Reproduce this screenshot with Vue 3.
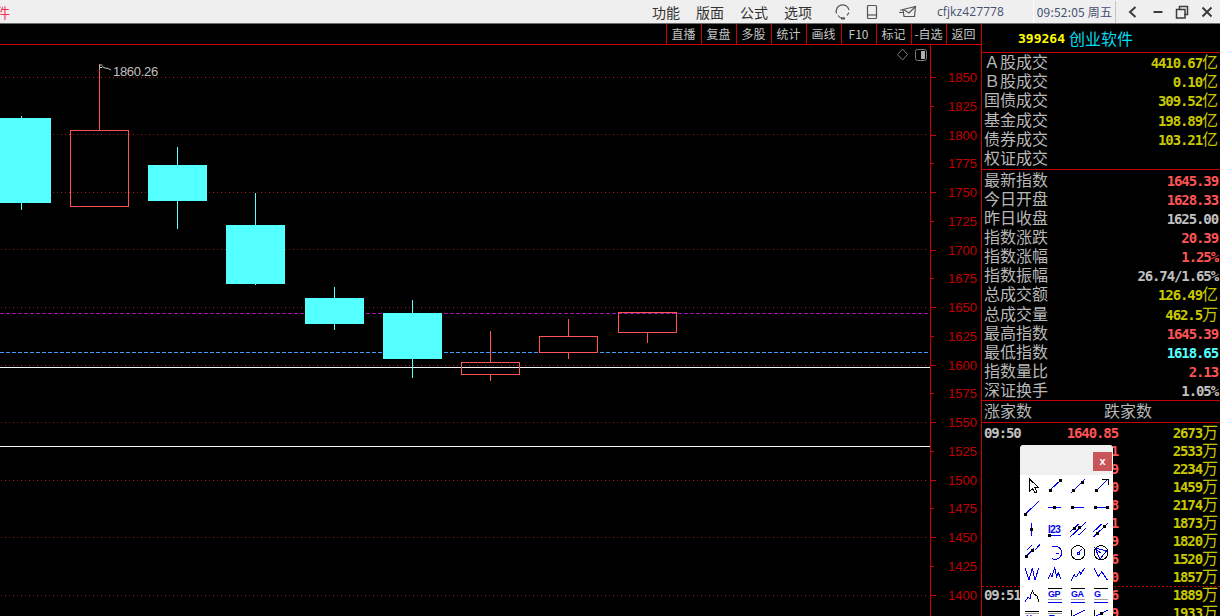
<template>
  <div class="screen">
    <header class="titlebar">
      <span class="app-name">件</span>
      <nav class="menu">
        <span v-for="m in menus" :key="m">{{ m }}</span>
      </nav>
      <div class="tray">
        <svg class="tray-icon" width="20" height="20" viewBox="0 0 20 20">
          <path d="M3.5 11.5A6.5 6.5 0 1 1 16 8" />
          <path d="M5 13.5a6.5 6.5 0 0 0 7 2.5" />
          <path d="M16 10.5l-2 3" />
          <path d="M8 16.5h4" class="thick" />
        </svg>
        <svg class="tray-icon phone" width="12" height="16" viewBox="0 0 12 16">
          <rect x="1.5" y="1.5" width="9" height="13" rx="1" />
          <path d="M1.5 11h9" />
        </svg>
        <svg class="tray-icon mail" width="18" height="14" viewBox="0 0 18 14">
          <path d="M4 4.5L16.5 1.5 15.5 11.5H5z" />
          <path d="M4.5 4.5L10 8l6.5-6.5" />
          <path d="M1 5h3M0 7.5h4" />
        </svg>
        <span class="user">cfjkz427778</span>
      </div>
      <div class="clock">09:52:05 周五</div>
      <div class="win-ctrl">
        <button class="win-btn">
          <svg width="14" height="14" viewBox="0 0 14 14"><path d="M9.5 2L4 7l5.500 5" /></svg>
        </button>
        <button class="win-btn">
          <svg width="14" height="14" viewBox="0 0 14 14"><path d="M2.500 7h9" /></svg>
        </button>
        <button class="win-btn">
          <svg width="14" height="14" viewBox="0 0 14 14">
            <path class="thin" d="M1.500 4.500h8.500v8.500h-8.500z" />
            <path class="thin" d="M4.500 4.500v-3h8v8h-3" />
          </svg>
        </button>
        <button class="win-btn">
          <svg width="14" height="14" viewBox="0 0 14 14"><path d="M2.500 2.500l9 9M11.500 2.500l-9 9" /></svg>
        </button>
      </div>
    </header>

    <main class="body">
      <section class="chart">
        <div class="chart-tools">
          <span v-for="t in chartTools" :key="t" class="chart-tool">{{ t }}</span>
        </div>
        <svg class="plot" width="981" height="571" viewBox="0 45 981 571">
          <line v-for="y in gridYs" :key="y" class="grid" x1="1" x2="926" :y1="y + 0.5" :y2="y + 0.5" />
          <line class="level white" x1="0" x2="930" y1="367.500" y2="367.500" />
          <line class="level white" x1="0" x2="930" y1="446.500" y2="446.500" />
          <line class="level purple" x1="0" x2="930" y1="313.500" y2="313.500" />
          <line class="level blue" x1="0" x2="930" y1="352.500" y2="352.500" />

          <g v-for="c in candles" :key="c.x" :class="c.up ? 'up' : 'down'">
            <line class="wick" :x1="c.x + 29.500" :x2="c.x + 29.500" :y1="c.high" :y2="c.top" />
            <line class="wick" :x1="c.x + 29.500" :x2="c.x + 29.500" :y1="c.bottom" :y2="c.low" />
            <rect
              class="body-box"
              :x="c.x + (c.up ? 0.500 : 0)"
              :y="c.top + (c.up ? 0.500 : 0)"
              :width="c.up ? 58 : 59"
              :height="c.bottom - c.top - (c.up ? 1 : 0)"
            />
          </g>

          <path class="peak" d="M99.500 69v-4h3M100 67.500h2M102 66.500l3 1.500 3 .5 3 1.500" />
          <text class="peak-text" x="113" y="76">1860.26</text>

          <path class="mark" d="M902.500 49l5 5.500-5 5.500-5-5.500z" />
          <rect class="mark" x="915.500" y="49.500" width="11" height="11" rx="2" />
          <rect class="mark-fill" x="921" y="51" width="4" height="8" />

          <line class="axis" x1="930.500" x2="930.500" y1="45" y2="616" />
          <g v-for="(t, i) in axisTicks" :key="t.label">
            <line class="axis" x1="930" :x2="i % 2 === 0 ? 936 : 934" :y1="t.y + 0.500" :y2="t.y + 0.500" />
            <text class="axis-label" x="948" :y="t.y + 5">{{ t.label }}</text>
          </g>
        </svg>
      </section>

      <aside class="side">
        <div class="quote-title">
          <span class="code">399264</span>
          <span class="name">创业软件</span>
        </div>

        <div class="stats first">
          <div v-for="r in volumeRows" :key="r.label" class="stat">
            <span class="label">{{ r.label }}</span>
            <span class="value yellow">
              <span class="num">{{ r.value }}</span><span class="unit">{{ r.unit }}</span>
            </span>
          </div>
        </div>

        <div class="stats second">
          <div v-for="r in indexRows" :key="r.label" class="stat">
            <span class="label">{{ r.label }}</span>
            <span class="value" :class="r.color">
              <span class="num">{{ r.value }}</span><span v-if="r.unit" class="unit">{{ r.unit }}</span>
            </span>
          </div>
        </div>

        <div class="breadth">
          <span>涨家数</span>
          <span>跌家数</span>
        </div>

        <div class="ticks">
          <div v-for="(t, i) in ticks" :key="i" class="tick" :class="{ 'new-min': t.time === '09:51' }">
            <span class="num gray">{{ t.time }}</span>
            <span class="num red price">{{ t.price }}</span>
            <span class="value yellow">
              <span class="num">{{ t.vol }}</span><span class="unit">万</span>
            </span>
          </div>
        </div>

        <div class="palette">
          <div class="palette-head">
            <button class="palette-close">x</button>
          </div>
          <div class="palette-grid">
            <svg v-for="(ic, i) in drawTools" :key="i" width="23" height="22" viewBox="0 0 23 22">
              <path v-if="ic.gray" class="t-gray" :d="ic.gray" />
              <path v-if="ic.blue" class="t-blue" :d="ic.blue" />
              <path v-if="ic.black" class="t-black" :d="ic.black" />
              <text v-if="ic.text" class="t-text" :x="ic.tx || 5" :y="ic.ty || 12" :font-size="ic.ts || 9">{{ ic.text }}</text>
              <rect v-for="(d, j) in ic.dots || []" :key="j" class="t-dot" :x="d[0] - 1.500" :y="d[1] - 1.500" width="3" height="3" />
            </svg>
          </div>
        </div>
      </aside>
    </main>
  </div>
</template>

<script setup>
const menus = ['功能', '版面', '公式', '选项']
const chartTools = ['直播', '复盘', '多股', '统计', '画线', 'F10', '标记', '-自选', '返回']

const gridYs = [77, 134, 192, 249, 307, 365, 422, 480, 537, 595]

const axisTicks = []
for (let i = 0; i < 19; i++) {
  axisTicks.push({ label: String(1850 - i * 25), y: Math.round(77 + i * 28.75) })
}

const candles = [
  { x: -8, up: false, high: 116, top: 118, bottom: 203, low: 210 },
  { x: 70, up: true, high: 64, top: 130, bottom: 207, low: 207 },
  { x: 148, up: false, high: 147, top: 165, bottom: 201, low: 229 },
  { x: 226, up: false, high: 193, top: 225, bottom: 284, low: 285 },
  { x: 305, up: false, high: 287, top: 298, bottom: 324, low: 330 },
  { x: 383, up: false, high: 300, top: 313, bottom: 359, low: 378 },
  { x: 461, up: true, high: 331, top: 362, bottom: 375, low: 381 },
  { x: 539, up: true, high: 319, top: 336, bottom: 353, low: 359 },
  { x: 618, up: true, high: 312, top: 312, bottom: 333, low: 343 }
]

const volumeRows = [
  { label: 'Ａ股成交', value: '4410.67', unit: '亿' },
  { label: 'Ｂ股成交', value: '0.10', unit: '亿' },
  { label: '国债成交', value: '309.52', unit: '亿' },
  { label: '基金成交', value: '198.89', unit: '亿' },
  { label: '债券成交', value: '103.21', unit: '亿' },
  { label: '权证成交', value: '', unit: '' }
]

const indexRows = [
  { label: '最新指数', value: '1645.39', color: 'red' },
  { label: '今日开盘', value: '1628.33', color: 'red' },
  { label: '昨日收盘', value: '1625.00', color: 'gray' },
  { label: '指数涨跌', value: '20.39', color: 'red' },
  { label: '指数涨幅', value: '1.25%', color: 'red' },
  { label: '指数振幅', value: '26.74/1.65%', color: 'gray' },
  { label: '总成交额', value: '126.49', unit: '亿', color: 'yellow' },
  { label: '总成交量', value: '462.5', unit: '万', color: 'yellow' },
  { label: '最高指数', value: '1645.39', color: 'red' },
  { label: '最低指数', value: '1618.65', color: 'cyan' },
  { label: '指数量比', value: '2.13', color: 'red' },
  { label: '深证换手', value: '1.05%', color: 'gray' }
]

const ticks = [
  { time: '09:50', price: '1640.85', vol: '2673' },
  { time: '', price: '1640.71', vol: '2533' },
  { time: '', price: '1640.59', vol: '2234' },
  { time: '', price: '1640.40', vol: '1459' },
  { time: '', price: '1640.38', vol: '2174' },
  { time: '', price: '1640.21', vol: '1873' },
  { time: '', price: '1640.09', vol: '1820' },
  { time: '', price: '1639.96', vol: '1520' },
  { time: '', price: '1639.80', vol: '1857' },
  { time: '09:51', price: '1639.76', vol: '1889' },
  { time: '', price: '1639.69', vol: '1933' }
]

const drawTools = [
  { black: 'M9.500 4V16L12.500 13.500 15 18 17 17 15 12.500H18.500Z' },
  { blue: 'M7 15L18 5', dots: [[7, 15], [17.500, 5.500]] },
  { blue: 'M5 18L19 4', dots: [[7.500, 15.500], [16, 7]] },
  { blue: 'M7 16L19 4', black: 'M13 4H19V10', dots: [[7.500, 15.500]] },

  { blue: 'M5 17.500L19 4', dots: [[5.500, 17.500]] },
  { blue: 'M5 10.500H18', dots: [[11.500, 10.500]] },
  { blue: 'M5 10.500H18', dots: [[6.500, 10.500]] },
  { blue: 'M6 10.500H18', dots: [[6.500, 10.500], [18, 10.500]] },

  { blue: 'M11.500 3.500V17', dots: [[11.500, 10.500]] },
  { blue: 'M5 16.500H18', dots: [[6, 16.500]], text: 'I23', tx: 5, ty: 13.500, ts: 10 },
  { blue: 'M4.500 12.700L12.700 5M4.500 17.700L20 3.300M12.700 16L20 9.300', dots: [[8.500, 9], [13.500, 8.500]] },
  { blue: 'M4.500 12.700L12.700 5M4.500 18L19.500 3.500', dots: [[8, 14.500], [15, 7.500]] },

  { blue: 'M6 15.700L14 7.500M7 9L12 4M15 9L20 3.500', dots: [[6.500, 15], [12.500, 9]] },
  { blue: 'M9.300 5.700A6.600 6.600 0 1 1 9.300 17.700M13 12H16' },
  { black: 'M5 11.700a7 7 0 1 0 14 0a7 7 0 1 0 -14 0', blue: 'M12 12L16 8M11 11h2v2h-2z' },
  { black: 'M5 11.700a7 7 0 1 0 14 0a7 7 0 1 0 -14 0', blue: 'M6 7L17.500 10 11 18ZM6 7L11.500 12' },

  { blue: 'M5 5L9 17 12.300 5 15 17 18.700 5' },
  { blue: 'M5 16.300L7.700 11 9 13.700 11.700 4.700 13.700 13.700 15.300 9.700 18 16.300' },
  { blue: 'M5 18L8.300 12 10 14.300 13.700 8.700 14.700 11 19 4.700' },
  { blue: 'M5 4.700L9.300 13.700 12.700 8.700 18.300 17' },

  { blue: 'M5 17L8 12 10 14 11 9', black: 'M11 9L12.500 6 14 9 17 11 19 17' },
  { black: 'M5 3.500H19', gray: 'M5 14.500H19', blue: 'M5 17.500H19', text: 'GP' },
  { black: 'M5 3.500H19', gray: 'M5 14.500H19', blue: 'M5 17.500H19', text: 'GA' },
  { black: 'M5 3.500H19', gray: 'M5 14.500H19', blue: 'M5 17.500H19', text: 'G' },

  { black: 'M5 4.500H19', gray: 'M5 6.500H19', text: 'X', ty: 14, tx: 6 },
  { black: 'M5 4.500H19', gray: 'M5 6.500H19', text: 'T', ty: 14, tx: 6 },
  { black: 'M5.500 3V14', blue: 'M5 10L19 3' },
  { black: 'M5.500 3V14', blue: 'M5 10L19 3', dots: [[12, 6.500]] }
]
</script>

<style>
html,
body {
  margin: 0;
  background: #000;
  overflow: hidden;
}
</style>

<style scoped>
.screen {
  width: 1220px;
  height: 616px;
  display: flex;
  flex-direction: column;
  overflow: hidden;
  background: #000;
  font-family: "Noto Sans CJK SC", "Liberation Sans", sans-serif;
}

.titlebar {
  height: 23px;
  flex-shrink: 0;
  display: flex;
  align-items: center;
  overflow: hidden;
  white-space: nowrap;
  background: #efefef;
  border-bottom: 1px solid #6e6e6e;
  color: #333;
  font-size: 14px;
}

.titlebar > * {
  flex: none;
}

.app-name {
  margin-left: -4px;
  color: #f5304f;
}

.menu {
  margin-left: 642px;
  display: flex;
  gap: 16px;
}

.tray {
  display: flex;
  align-items: center;
  margin-left: 21px;
}

.tray-icon {
  flex: none;
  fill: none;
  stroke: #555;
  stroke-width: 1.2;
}

.tray-icon .thick {
  stroke-width: 2;
}

.phone {
  margin-left: 13px;
}

.mail {
  margin-left: 21px;
}

.user {
  margin-left: 20px;
  color: #45506e;
  font-family: "Open Sans", "Liberation Sans", sans-serif;
  font-size: 12px;
  letter-spacing: 0.100px;
}

.clock {
  margin-left: 29px;
  width: 81px;
  height: 22px;
  line-height: 22px;
  text-align: center;
  color: #45506e;
  font-size: 12px;
  letter-spacing: 0.200px;
  border-left: 1px solid #fff;
  border-right: 1px solid #c4c4c4;
}

.win-ctrl {
  margin-left: 5px;
  display: flex;
}

.win-btn {
  flex: none;
  width: 24.500px;
  height: 22px;
  padding: 0;
  border: 0;
  background: none;
  display: flex;
  align-items: center;
  justify-content: center;
}

.win-btn path {
  fill: none;
  stroke: #3c3c3c;
  stroke-width: 2;
}

.win-btn path.thin {
  stroke-width: 1.500;
}

.body {
  flex: 1;
  min-height: 0;
  display: flex;
}

.chart {
  width: 981px;
  flex-shrink: 0;
}

.chart-tools {
  height: 20px;
  display: flex;
  justify-content: flex-end;
  border-bottom: 1px solid #c80000;
}

.chart-tool {
  width: 35px;
  box-sizing: border-box;
  border-left: 1px solid #c80000;
  padding-right: 1px;
  text-align: center;
  line-height: 20px;
  font-size: 12px;
  color: #c4c4c4;
  white-space: nowrap;
}

.plot {
  display: block;
  font-family: "Liberation Sans", sans-serif;
}

.grid {
  stroke: #a01c1c;
  stroke-dasharray: 1 3;
  shape-rendering: crispEdges;
}

.level {
  shape-rendering: crispEdges;
}

.level.white {
  stroke: #f4f4f4;
}

.level.purple {
  stroke: #a414a4;
  stroke-dasharray: 4 2;
}

.level.blue {
  stroke: #3f9cff;
  stroke-dasharray: 4 2;
}

.wick {
  shape-rendering: crispEdges;
}

.up .wick {
  stroke: #ff5454;
}

.down .wick {
  stroke: #54ffff;
}

.body-box {
  shape-rendering: crispEdges;
}

.up .body-box {
  fill: none;
  stroke: #ff5454;
}

.down .body-box {
  fill: #54ffff;
}

.peak {
  fill: none;
  stroke: #c0c0c0;
}

.peak-text {
  fill: #c0c0c0;
  font-size: 13px;
  letter-spacing: -0.300px;
}

.mark {
  fill: none;
  stroke: #7c7c7c;
}

.mark-fill {
  fill: #b0b0b0;
}

.axis {
  stroke: #c80000;
  shape-rendering: crispEdges;
}

.axis-label {
  fill: #c00000;
  font-size: 13px;
}

.side {
  position: relative;
  flex: 1;
  min-width: 0;
  box-sizing: border-box;
  border-left: 1px solid #c80000;
  color: #b8b8b8;
  font-size: 16px;
}

.quote-title {
  height: 29px;
  box-sizing: border-box;
  padding-left: 36px;
  display: flex;
  align-items: center;
  gap: 4px;
  border-bottom: 1px solid #c80000;
}

.code {
  color: #ffff00;
  font-family: "DejaVu Sans Mono", monospace;
  font-size: 13px;
  font-weight: 700;
}

.name {
  color: #00dcf0;
  line-height: 24px;
}

.stats {
  box-sizing: border-box;
  border-bottom: 1px solid #c80000;
  padding: 0 2px;
}

.stats.first {
  height: 117px;
}

.stats.first .stat {
  line-height: 17.200px;
}

.stats.second {
  height: 231px;
}

.stats.second .stat {
  height: 19.090px;
  line-height: 19.090px;
}

.stat {
  height: 19.200px;
  line-height: 19.200px;
  display: flex;
  justify-content: space-between;
}

.label {
  white-space: nowrap;
}

.num {
  font-family: "DejaVu Sans Mono", monospace;
  font-size: 14px;
  font-weight: 700;
  letter-spacing: -1.100px;
}

.value {
  white-space: nowrap;
}

.unit {
  font-weight: 400;
}

.yellow {
  color: #c8c800;
}

.red {
  color: #ff5454;
}

.gray {
  color: #c0c0c0;
}

.cyan {
  color: #54ffff;
}

.breadth {
  height: 22px;
  box-sizing: border-box;
  border-bottom: 1px solid #c80000;
  padding-left: 2px;
  display: flex;
  gap: 72px;
  line-height: 19px;
}

.ticks {
  padding-top: 1px;
}

.tick {
  height: 18px;
  box-sizing: border-box;
  padding: 0 2px;
  display: grid;
  grid-template-columns: 60px 74px 1fr;
  align-items: baseline;
}

.tick.new-min {
  background-image: linear-gradient(to right, #c80000 50%, transparent 50%);
  background-size: 4px 1px;
  background-repeat: repeat-x;
  background-position: 0 0;
}

.price {
  text-align: right;
}

.tick .value {
  line-height: 14px;
  text-align: right;
}

.palette {
  position: absolute;
  left: 38px;
  top: 421px;
  width: 93px;
  height: 190px;
  background: #fff;
  border-radius: 4px 4px 0 0;
}

.palette-head {
  height: 30px;
  box-sizing: border-box;
  background: #f0f0f0;
  border-radius: 4px 4px 0 0;
  display: flex;
  justify-content: flex-end;
  padding: 7px 1px 0 0;
}

.palette-close {
  width: 19px;
  height: 19px;
  padding: 0;
  border: 0;
  background: #c8555a;
  color: #fff;
  font-family: "Liberation Sans", sans-serif;
  font-size: 11px;
  font-weight: 700;
  line-height: 17px;
}

.palette-grid {
  display: grid;
  grid-template-columns: repeat(4, 23px);
  grid-auto-rows: 22px;
}

.palette-grid path {
  shape-rendering: crispEdges;
}

.t-blue,
.t-black,
.t-gray {
  fill: none;
}

.t-blue {
  stroke: #0000f0;
}

.t-black {
  stroke: #000;
}

.t-gray {
  stroke: #a4a4a4;
}

.t-dot {
  fill: #000;
  shape-rendering: crispEdges;
}

.t-text {
  fill: #0000f0;
  font-family: "Liberation Sans", sans-serif;
  font-weight: 700;
  letter-spacing: -0.500px;
}
</style>
